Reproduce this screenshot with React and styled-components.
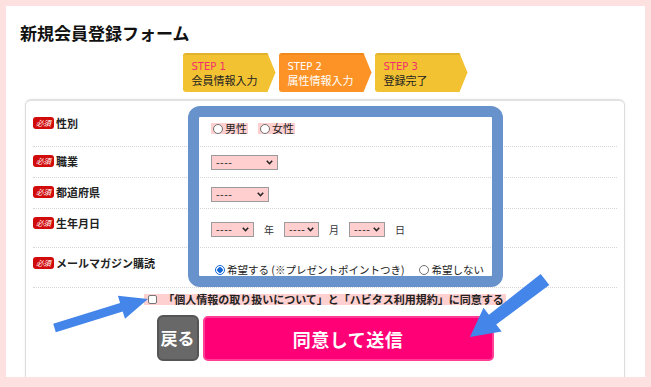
import React from 'react';
import styled, { createGlobalStyle } from 'styled-components';

const GlobalStyle = createGlobalStyle`
  html, body {
    margin: 0;
    padding: 0;
    background: #fde1e1;
  }
  body {
    font-family: "Noto Sans CJK JP", "Noto Sans", sans-serif;
    color: #222;
  }
`;

const Page = styled.div`
  position: relative;
  width: 651px;
  height: 387px;
  padding: 6px 6px 10px 6px;
  box-sizing: border-box;
  overflow: hidden;
`;

const Panel = styled.div`
  background: #fff;
  height: 371px;
  overflow: hidden;
  padding: 0 20px 0 19px;
  box-sizing: border-box;
`;

const Title = styled.h1`
  margin: 0 0 0 -5px;
  padding: 17px 0 0 0;
  font-size: 17px;
  line-height: 20px;
  font-weight: 700;
  color: #111;
`;

const Steps = styled.div`
  display: flex;
  justify-content: center;
  gap: 3px;
  margin-top: 10px;
`;

const Step = styled.div`
  width: 93px;
  height: 39px;
  box-sizing: border-box;
  padding: 6px 0 0 9px;
  background: ${p => (p.$active ? '#fd9326' : '#f3c232')};
  border-top: 2px solid ${p => (p.$active ? '#f08a1c' : '#e2b22a')};
  border-radius: 3px 0 0 3px;
  clip-path: polygon(0 0, 85px 0, 93px 50%, 85px 100%, 0 100%);
`;

const StepNo = styled.div`
  font-family: "DejaVu Sans", "Noto Sans", sans-serif;
  font-size: 10px;
  line-height: 12px;
  color: ${p => (p.$active ? '#fff' : '#ef2f6e')};
`;

const StepName = styled.div`
  font-size: 11px;
  line-height: 14px;
  color: ${p => (p.$active ? '#fff' : '#222')};
`;

const FormBox = styled.div`
  margin-top: 7px;
  border: 1px solid #ddd;
  border-top: 2px solid #e2e2e2;
  border-radius: 6px;
  box-shadow: 0 0 2px rgba(0, 0, 0, 0.08);
  padding: 0 7px 40px 7px;
`;

const Row = styled.div`
  display: grid;
  grid-template-columns: 178px 1fr;
  height: ${p => p.$h}px;
  box-sizing: border-box;
  border-bottom: 1px dotted #d6d6d6;
`;

const Label = styled.div`
  display: flex;
  align-items: center;
  height: 12px;
  padding-top: ${p => p.$pt}px;
`;

const Badge = styled.span`
  display: inline-flex;
  align-items: center;
  justify-content: center;
  width: 21px;
  height: 12px;
  border-radius: 3px;
  background: #d10a0a;
  color: #fff;
  font-size: 7.5px;
  font-style: italic;
  line-height: 12px;
`;

const LabelText = styled.span`
  margin-left: 2px;
  font-size: 11px;
  font-weight: 700;
  line-height: 12px;
  color: #222;
`;

const Value = styled.div`
  display: flex;
  align-items: center;
  padding-top: ${p => p.$pt}px;
  height: 15px;
`;

const Option = styled.label`
  display: inline-flex;
  align-items: center;
  height: 11px;
  padding: 0 1px 0 ${p => p.$pl || 2}px;
  margin-right: ${p => p.$mr || 0}px;
  background: ${p => (p.$hl ? '#ffd0d0' : 'transparent')};
  font-size: ${p => p.$fs || 11}px;
  line-height: 11px;
  color: #222;
`;

const Radio = styled.span`
  display: inline-block;
  width: 10px;
  height: 10px;
  box-sizing: border-box;
  border-radius: 50%;
  border: 1px solid ${p => (p.$checked ? '#1467d6' : '#707070')};
  background: ${p =>
    p.$checked ? 'radial-gradient(circle, #1467d6 0 2.5px, #fff 3px)' : '#fff'};
  margin-right: 2px;
`;

const SelectBox = styled.div`
  display: flex;
  align-items: center;
  justify-content: space-between;
  width: ${p => p.$w}px;
  height: 15px;
  box-sizing: border-box;
  border: 1px solid #9b9b9b;
  background: #ffcfcf;
  padding: 0 4px 0 4px;
  font-family: "DejaVu Sans", sans-serif;
  font-size: 10px;
  letter-spacing: 0.5px;
  color: #333;
`;

const Unit = styled.span`
  margin: 0 10px;
  font-size: 10px;
  line-height: 12px;
  color: #333;
`;

const AgreeLine = styled.div`
  display: flex;
  justify-content: center;
  margin-top: 6px;
`;

const AgreeLabel = styled.label`
  display: inline-flex;
  align-items: center;
  height: 11px;
  padding: 0 2px 0 4px;
  background: #ffd0d0;
  font-size: 11px;
  font-weight: 700;
  line-height: 11px;
  color: #222;
`;

const CheckBox = styled.span`
  display: inline-block;
  width: 9px;
  height: 9px;
  box-sizing: border-box;
  border: 1px solid #777;
  border-radius: 2px;
  background: #fff;
  margin-right: 6px;
`;

const Buttons = styled.div`
  display: flex;
  justify-content: center;
  align-items: center;
  gap: 4px;
  margin-top: 9px;
`;

const BackButton = styled.button`
  width: 42px;
  height: 46px;
  padding: 0;
  border: 2px solid #555;
  border-radius: 6px;
  background: #686868;
  color: #fff;
  font-family: inherit;
  font-size: 17px;
  font-weight: 700;
`;

const SendButton = styled.button`
  width: 291px;
  height: 45px;
  margin-top: 2px;
  border: 2px solid #ff3f95;
  border-radius: 5px;
  background: #ff0077;
  color: #fff;
  font-family: inherit;
  font-size: 18px;
  font-weight: 700;
  letter-spacing: 0.5px;
`;

const Highlight = styled.div`
  position: absolute;
  left: 188px;
  top: 106px;
  width: 315px;
  height: 181px;
  box-sizing: border-box;
  border: 11px solid #6792cb;
  border-radius: 12px;
  pointer-events: none;
`;

const Arrows = styled.svg`
  position: absolute;
  left: 0;
  top: 0;
  pointer-events: none;
`;

const Chevron = () => (
  <svg width="7" height="5" viewBox="0 0 7 5">
    <polyline points="0.8,0.8 3.5,3.7 6.2,0.8" fill="none" stroke="#222" strokeWidth="1.6" />
  </svg>
);

const Select = ({ w }) => (
  <SelectBox $w={w}>
    <span>----</span>
    <Chevron />
  </SelectBox>
);

const Field = ({ label, h, lpt, vpt, children }) => (
  <Row $h={h}>
    <Label $pt={lpt}>
      <Badge>必須</Badge>
      <LabelText>{label}</LabelText>
    </Label>
    <Value $pt={vpt}>{children}</Value>
  </Row>
);

export default function App() {
  return (
    <Page>
      <GlobalStyle />
      <Panel>
        <Title>新規会員登録フォーム</Title>
        <Steps>
          <Step>
            <StepNo>STEP 1</StepNo>
            <StepName>会員情報入力</StepName>
          </Step>
          <Step $active>
            <StepNo $active>STEP 2</StepNo>
            <StepName $active>属性情報入力</StepName>
          </Step>
          <Step>
            <StepNo>STEP 3</StepNo>
            <StepName>登録完了</StepName>
          </Step>
        </Steps>

        <FormBox>
          <Field label="性別" h={46} lpt={16} vpt={20}>
            <Option $hl $mr={10}>
              <Radio />男性
            </Option>
            <Option $hl>
              <Radio />女性
            </Option>
          </Field>
          <Field label="職業" h={31} lpt={8} vpt={8}>
            <Select w={67} />
          </Field>
          <Field label="都道府県" h={31} lpt={8} vpt={9}>
            <Select w={58} />
          </Field>
          <Field label="生年月日" h={39} lpt={8} vpt={13}>
            <Select w={43} />
            <Unit>年</Unit>
            <Select w={35} />
            <Unit>月</Unit>
            <Select w={36} />
            <Unit>日</Unit>
          </Field>
          <Field label="メールマガジン購読" h={40} lpt={9} vpt={14}>
            <Option $fs={10.5} $mr={12} $pl={4}>
              <Radio $checked />希望する (※プレゼントポイントつき)
            </Option>
            <Option $fs={10.5}>
              <Radio />希望しない
            </Option>
          </Field>

          <AgreeLine>
            <AgreeLabel>
              <CheckBox />
              「個人情報の取り扱いについて」と「ハビタス利用規約」に同意する
            </AgreeLabel>
          </AgreeLine>

          <Buttons>
            <BackButton>戻る</BackButton>
            <SendButton>同意して送信</SendButton>
          </Buttons>
        </FormBox>
      </Panel>

      <Highlight />
      <Arrows width="651" height="387" viewBox="0 0 651 387">
        <polygon
          fill="#4485ea"
          points="53.2,323.7 120.1,303 117.9,295.8 148,299 125,318.8 122.7,311.6 55.8,332.3"
        />
        <polygon
          fill="#4485ea"
          points="540.7,273.9 488.9,314.8 483.5,307.7 470,337 501.7,331.5 496.2,324.4 549.3,285.1"
        />
      </Arrows>
    </Page>
  );
}
